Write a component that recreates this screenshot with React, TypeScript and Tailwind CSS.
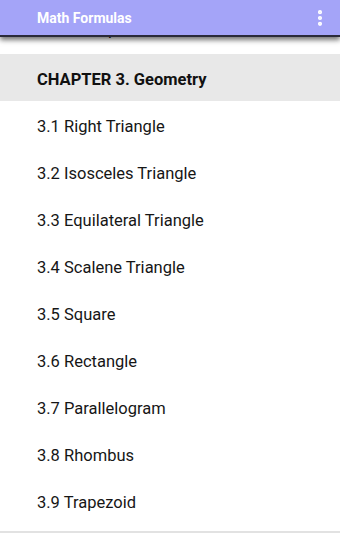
import { EllipsisVertical } from 'lucide-react';

const items = [
  '3.1 Right Triangle',
  '3.2 Isosceles Triangle',
  '3.3 Equilateral Triangle',
  '3.4 Scalene Triangle',
  '3.5 Square',
  '3.6 Rectangle',
  '3.7 Parallelogram',
  '3.8 Rhombus',
  '3.9 Trapezoid',
];

export default function App() {
  return (
    <div
      className="relative w-[340px] h-[535px] overflow-hidden bg-white text-[#161616]"
      style={{ fontFamily: 'Roboto, "Noto Sans", sans-serif' }}
    >
      {/* App bar overlays the scrolled list */}
      <div className="absolute top-0 left-0 right-0 z-10 h-[37px] bg-[#a4a4f8] border-b-2 border-[#2a2a3a] shadow-[0_3px_5px_rgba(0,0,0,0.55)] flex items-center justify-between pl-[37px] pr-[10px]">
        <span className="text-white text-[14px] font-bold pt-[1px]">Math Formulas</span>
        <EllipsisVertical className="h-[20px] w-[20px] text-white" strokeWidth={3} />
      </div>

      {/* Scrolled list: the previous row is mostly hidden under the app bar */}
      <div className="pt-[7px]">
        <div className="h-[47px] flex items-center pl-[37px] text-[16.5px]">
          2.10 Compound Interest Formulas
        </div>
        <div className="h-[47px] flex items-center pl-[37px] pt-[5px] bg-[#e8e8e8] text-[16.5px] font-bold text-[#111]">
          CHAPTER 3. Geometry
        </div>
        {items.map((item) => (
          <div key={item} className="h-[47px] flex items-center pl-[37px] pt-[5px] text-[16.5px]">
            {item}
          </div>
        ))}
        <div className="mt-[7px] border-t-2 border-[#e2e2e2]" />
      </div>
    </div>
  );
}
